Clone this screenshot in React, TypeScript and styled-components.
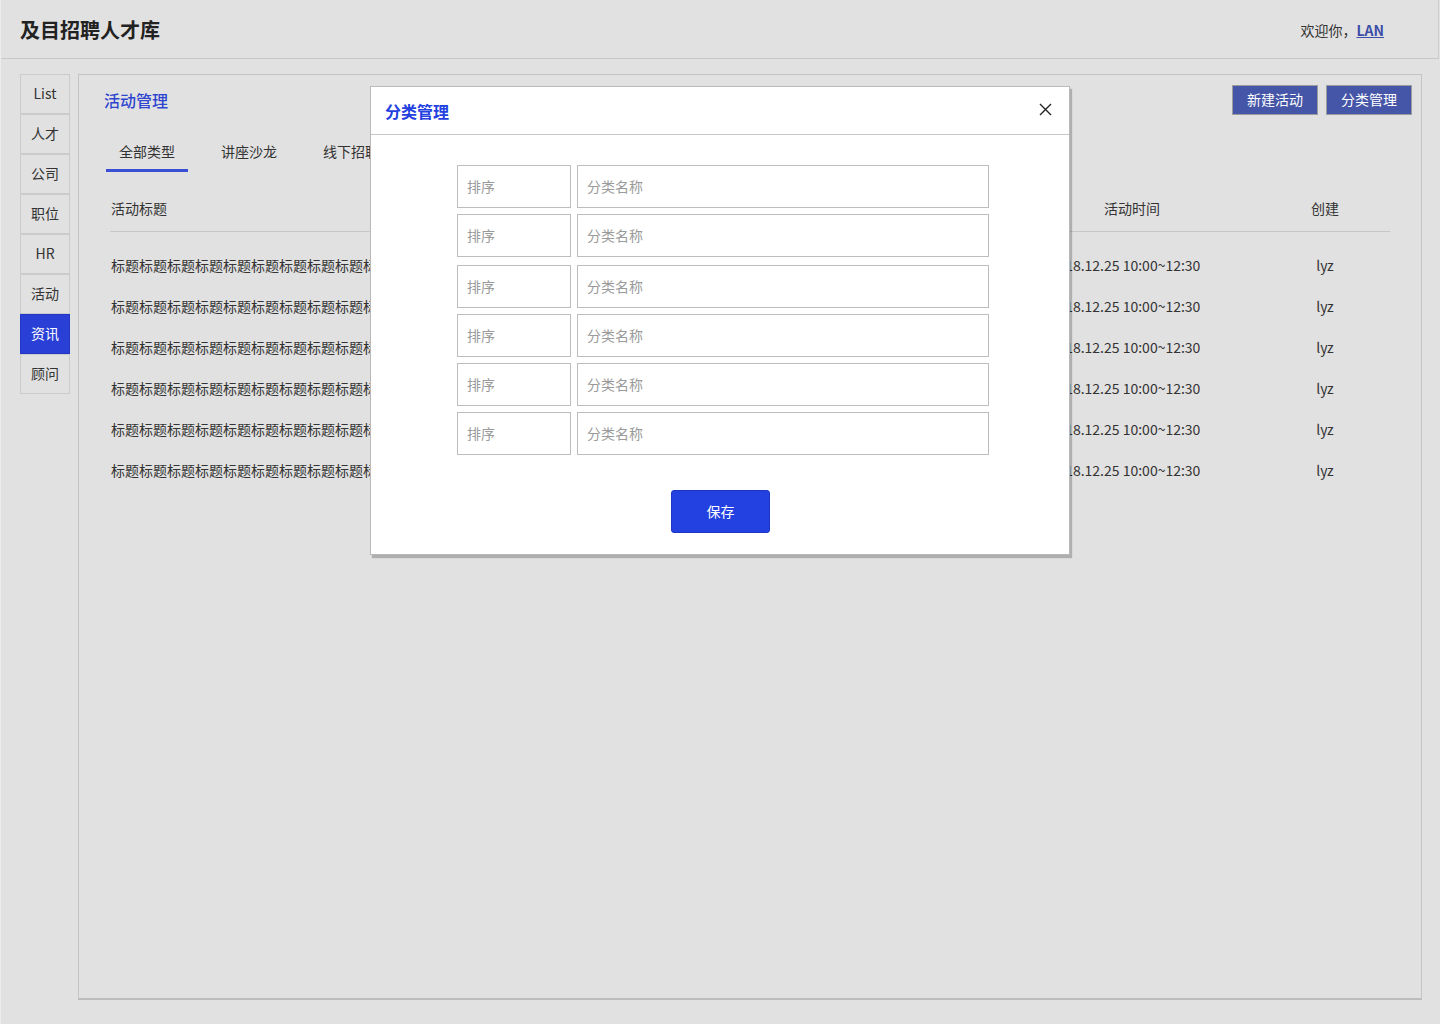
import styled, { createGlobalStyle } from "styled-components";

const GlobalStyle = createGlobalStyle`
  * { box-sizing: border-box; }
  html, body { margin: 0; padding: 0; }
  body {
    background: #e1e1e1;
    font-family: "Noto Sans CJK SC", "Noto Sans", sans-serif;
    color: #333;
  }
`;

const navItems = ["List", "人才", "公司", "职位", "HR", "活动", "资讯", "顾问"];
const tabs = ["全部类型", "讲座沙龙", "线下招聘"];
const rows = [1, 2, 3, 4, 5, 6];
const categories = [0, 0, 2, 0, 0, 0];

function App() {
  return (
    <Page>
      <GlobalStyle />
      <Header>
        <Brand>及目招聘人才库</Brand>
        <Welcome>
          欢迎你，<UserLink href="#">LAN</UserLink>
        </Welcome>
      </Header>
      <Body>
        <Sidebar>
          {navItems.map((item) => (
            <NavItem key={item} $active={item === "资讯"}>
              {item}
            </NavItem>
          ))}
        </Sidebar>
        <Panel>
          <TitleRow>
            <PanelTitle>活动管理</PanelTitle>
            <Actions>
              <ActionButton>新建活动</ActionButton>
              <ActionButton>分类管理</ActionButton>
            </Actions>
          </TitleRow>
          <Tabs>
            {tabs.map((tab, i) => (
              <Tab key={tab} $active={i === 0}>
                {tab}
              </Tab>
            ))}
          </Tabs>
          <Table>
            <HeadRow>
              <TitleCell>活动标题</TitleCell>
              <CenterCell>活动时间</CenterCell>
              <CenterCell>创建</CenterCell>
            </HeadRow>
            <RowList>
              {rows.map((r) => (
                <Row key={r}>
                  <TitleCell>{"标题".repeat(30)}</TitleCell>
                  <CenterCell $shift>2018.12.25 10:00~12:30</CenterCell>
                  <CenterCell>lyz</CenterCell>
                </Row>
              ))}
            </RowList>
          </Table>
        </Panel>
      </Body>

      <Modal>
        <ModalHeader>
          <ModalTitle>分类管理</ModalTitle>
          <CloseButton aria-label="关闭">
            <svg width="13" height="13" viewBox="0 0 13 13">
              <path d="M1 1 L12 12 M12 1 L1 12" stroke="#222" strokeWidth="1.4" fill="none" />
            </svg>
          </CloseButton>
        </ModalHeader>
        <ModalBody>
          {categories.map((extra, i) => (
            <FieldRow key={i} $extra={extra}>
              <SortInput placeholder="排序" />
              <NameInput placeholder="分类名称" />
            </FieldRow>
          ))}
          <SaveButton>保存</SaveButton>
        </ModalBody>
      </Modal>
    </Page>
  );
}

const Page = styled.div`
  position: relative;
  width: 1440px;
  height: 1024px;
  border-left: 1px solid #ececec;
`;

const Header = styled.header`
  height: 59px;
  margin-right: 1px;
  display: flex;
  align-items: center;
  justify-content: space-between;
  padding: 0 54px 0 19px;
  border-bottom: 1px solid #c8c8c8;
  border-right: 1px solid #cfcfcf;
`;

const Brand = styled.h1`
  margin: 0;
  font-size: 20px;
  font-weight: 700;
  color: #222;
  line-height: 24px;
  margin-top: 2px;
`;

const Welcome = styled.div`
  font-size: 14px;
  color: #333;
  margin-top: 2px;
`;

const UserLink = styled.a`
  color: #3c4ea8;
  font-weight: 700;
  text-decoration: underline;
`;

const Body = styled.div`
  display: flex;
  gap: 8px;
  padding: 15px 18px 24px 19px;
  height: 965px;
`;

const Sidebar = styled.nav`
  width: 50px;
  display: flex;
  flex-direction: column;
`;

const NavItem = styled.div<{ $active?: boolean }>`
  height: 40px;
  display: flex;
  align-items: center;
  justify-content: center;
  padding-bottom: 2px;
  font-size: 14px;
  border: 1px solid ${({ $active }) => ($active ? "#2438c8" : "#cbcbcb")};
  background: ${({ $active }) => ($active ? "#2a3fd6" : "transparent")};
  color: ${({ $active }) => ($active ? "#fff" : "#333")};
`;

const Panel = styled.main`
  flex: 1;
  border: 1px solid #c4c4c4;
  border-bottom: 2px solid #bcbcbc;
  display: flex;
  flex-direction: column;
`;

const TitleRow = styled.div`
  display: flex;
  justify-content: space-between;
  align-items: flex-start;
  padding: 10px 9px 0 25px;
`;

const PanelTitle = styled.h2`
  margin: 4px 0 0;
  font-size: 16px;
  line-height: 22px;
  font-weight: 500;
  color: #2f45d0;
`;

const Actions = styled.div`
  display: flex;
  gap: 8px;
`;

const ActionButton = styled.button`
  height: 30px;
  width: 86px;
  border: 1px solid #9c9c9c;
  background: #4555a7;
  color: #fff;
  font-family: inherit;
  font-size: 14px;
  padding: 0 0 2px;
`;

const Tabs = styled.div`
  display: flex;
  gap: 20px;
  margin: 19px 0 0 27px;
`;

const Tab = styled.div<{ $active?: boolean }>`
  padding: 7px 13px 8px;
  font-size: 14px;
  line-height: 20px;
  color: #333;
  border-bottom: 3px solid ${({ $active }) => ($active ? "#3a4fd4" : "transparent")};
`;

const Table = styled.div`
  margin: 13px 31px 0;
`;

const HeadRow = styled.div`
  display: grid;
  grid-template-columns: 1fr 256px 130px;
  align-items: center;
  height: 47px;
  border-bottom: 1px solid #c6c6c6;
  font-size: 14px;
`;

const RowList = styled.div`
  padding-top: 12px;
`;

const Row = styled.div`
  display: grid;
  grid-template-columns: 1fr 256px 130px;
  align-items: center;
  height: 41px;
  font-size: 14px;
`;

const TitleCell = styled.div`
  padding-left: 1px;
  white-space: nowrap;
  overflow: hidden;
`;

const CenterCell = styled.div<{ $shift?: boolean }>`
  text-align: center;
  white-space: nowrap;
  padding-right: ${({ $shift }) => ($shift ? "14px" : "0")};
`;

const Modal = styled.div`
  position: absolute;
  left: 369px;
  top: 86px;
  width: 700px;
  height: 469px;
  background: #fff;
  border: 1px solid #b8b8b8;
  box-shadow: 2px 3px 1px rgba(0, 0, 0, 0.22);
  display: flex;
  flex-direction: column;
`;

const ModalHeader = styled.div`
  height: 48px;
  display: flex;
  align-items: center;
  justify-content: space-between;
  padding: 0 17px 0 14px;
  border-bottom: 1px solid #c8c8c8;
`;

const ModalTitle = styled.h3`
  margin: 0;
  font-size: 16px;
  font-weight: 700;
  color: #2340e0;
`;

const CloseButton = styled.button`
  border: none;
  background: none;
  padding: 0;
  width: 13px;
  height: 13px;
  display: flex;
  margin-top: -2px;
`;

const ModalBody = styled.div`
  display: flex;
  flex-direction: column;
  padding: 30px 0 0 86px;
`;

const FieldRow = styled.div<{ $extra: number }>`
  display: flex;
  gap: 6px;
  margin-top: ${({ $extra }) => 6 + $extra}px;
  &:first-child { margin-top: 0; }
`;

const BaseInput = styled.input`
  height: 43px;
  border: 1px solid #bdbdbd;
  padding: 0 9px 1px;
  font-family: inherit;
  font-size: 14px;
  color: #333;
  outline: none;
  &::placeholder { color: #9a9a9a; }
`;

const SortInput = styled(BaseInput)`
  width: 114px;
`;

const NameInput = styled(BaseInput)`
  width: 412px;
`;

const SaveButton = styled.button`
  align-self: flex-start;
  margin: 35px 0 0 214px;
  width: 99px;
  height: 43px;
  padding: 0 0 2px;
  border: 1px solid #1e36c4;
  border-radius: 3px;
  background: #2340e0;
  color: #fff;
  font-family: inherit;
  font-size: 14px;
`;

export default App;
